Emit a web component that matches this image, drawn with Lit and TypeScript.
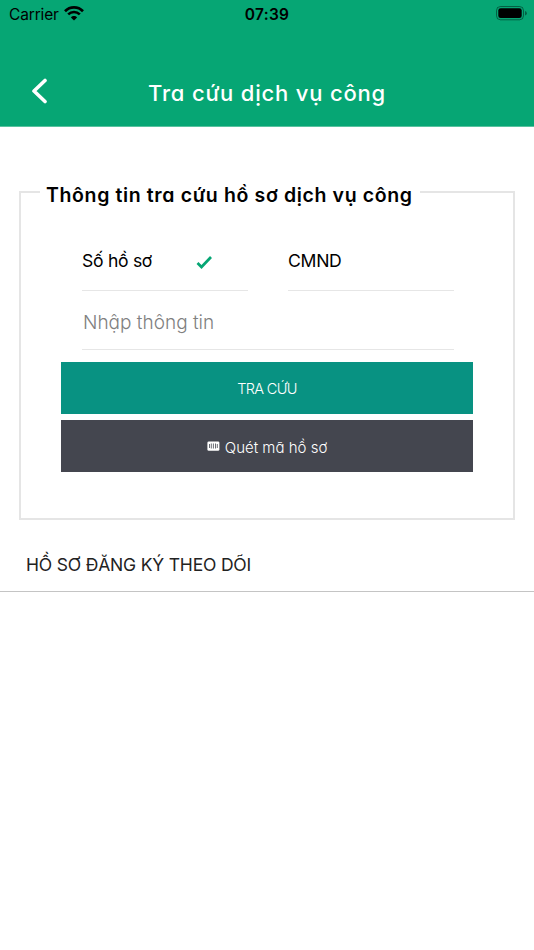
import { LitElement, html, css } from "lit";
import { customElement, state } from "lit/decorators.js";

@customElement("status-bar")
class StatusBar extends LitElement {
  static styles = css`
    :host {
      display: grid;
      grid-template-columns: 1fr auto 1fr;
      align-items: center;
      height: 27px;
      padding: 0 7px 0 9px;
      color: #000;
      font: 15.5px/27px Inter, sans-serif;
    }
    .carrier { display: flex; align-items: center; gap: 5px; letter-spacing: -0.15px; }
    .carrier span, .time { padding-top: 1px; }
    .time { font-weight: 600; letter-spacing: 0.3px; font-size: 15.5px; margin-right: 2px; }
    .battery { justify-self: end; display: block; margin-top: -1px; }
    svg { display: block; }
    .wifi { margin-top: -1px; }
  `;
  render() {
    return html`
      <div class="carrier">
        <span>Carrier</span>
        <svg class="wifi" width="20" height="15" viewBox="0 0 20 15" fill="none" stroke="#000">
          <path d="M1 5.2C6 .1 14 .1 19 5.2" stroke-width="2.7" />
          <path d="M4.2 8.4c3.3-3.2 8.3-3.2 11.6 0" stroke-width="2.6" />
          <path d="M6.9 11.4C8.6 9.6 11.4 9.6 13.1 11.4L10 14.5Z" fill="#000" stroke="none" />
        </svg>
      </div>
      <span class="time">07:39</span>
      <svg class="battery" width="31" height="15" viewBox="0 0 31 15">
        <rect x=".5" y=".5" width="27" height="13.3" rx="4" fill="none" stroke="#000" stroke-opacity=".42" />
        <rect x="2.3" y="2.3" width="23.4" height="9.7" rx="2.3" />
        <path d="M29.2 5v4.6q1.5-.6 1.5-2.3T29.2 5Z" fill-opacity=".5" />
      </svg>
    `;
  }
}

@customElement("app-root")
export class AppRoot extends LitElement {
  @state() private selected = 0;
  private kinds = ["Số hồ sơ", "CMND"];

  static styles = css`
    :host {
      display: block;
      min-height: 950px;
      background: #fff;
      color: #000;
      font-family: Inter, sans-serif;
    }
    * { box-sizing: border-box; }
    .geo { font-feature-settings: "cv11"; }
    header { height: 127px; background: #06a674; border-bottom: 1px solid #58c29f; }
    .nav {
      display: grid;
      grid-template-columns: 60px 1fr 60px;
      align-items: center;
      height: 72px;
      margin-top: 28px;
      color: #fff;
    }
    .back { display: block; margin: 0 0 0 30px; }
    .title {
      margin: 4px 0 0;
      text-align: center;
      font-size: 22px;
      font-weight: 450;
      letter-spacing: 0.8px;
      white-space: nowrap;
    }
    .lookup {
      height: 341px;
      margin: 52px 19px 0;
      padding: 26px 40px 0;
      border: 2px solid #e5e5e5;
    }
    .legend {
      height: 26px;
      margin-left: -21px;
      padding: 6px 7px 0 6px;
      font-size: 19.5px;
      line-height: 20px;
      font-weight: 560;
      letter-spacing: 0.63px;
      white-space: nowrap;
    }
    .kinds { display: grid; grid-template-columns: 166px 166px; column-gap: 40px; margin-left: 21px; }
    .kind {
      display: flex;
      justify-content: space-between;
      align-items: center;
      height: 60px;
      padding: 0 35px 1px 0;
      border-bottom: 1px solid #e6e6e6;
      font-size: 17.6px;
      letter-spacing: -0.3px;
    }
    .check { display: block; margin-top: 5px; }
    .query {
      display: block;
      width: 372px;
      height: 59px;
      margin: 0 0 12px 21px;
      padding: 4px 1px 0;
      border: 0;
      border-bottom: 1px solid #e6e6e6;
      outline: 0;
      background: none;
      font-family: Inter, sans-serif;
      font-size: 19px;
      font-weight: 300;
    }
    .query::placeholder { color: #808080; opacity: 1; }
    .action {
      display: flex;
      align-items: center;
      justify-content: center;
      gap: 5px;
      width: 412px;
      height: 52px;
      margin: 0 0 6px;
      padding: 0;
      border: 0;
      color: #fff;
      font-family: Inter, sans-serif;
      font-size: 15px;
      font-weight: 300;
    }
    .action span { padding-top: 2px; }
    .search { background: #089282; font-size: 14.5px; letter-spacing: -0.65px; }
    .scan { background: #44464f; }
    .heading {
      height: 72px;
      margin: 0;
      padding-left: 26px;
      border-bottom: 1px solid #c4c4c4;
      color: #222;
      font-size: 17.5px;
      line-height: 89px;
      font-weight: 400;
      letter-spacing: -0.18px;
    }
  `;

  render() {
    return html`
      <header>
        <status-bar></status-bar>
        <div class="nav">
          <svg class="back" width="18" height="26" viewBox="0 0 18 26" fill="none" stroke="#fff" stroke-width="3.6" stroke-linecap="round" stroke-linejoin="round">
            <path d="M15 2.5 4 13l11 10.5" />
          </svg>
          <h1 class="title geo">Tra cứu dịch vụ công</h1>
        </div>
      </header>
      <fieldset class="lookup">
        <legend class="legend geo">Thông tin tra cứu hồ sơ dịch vụ công</legend>
        <div class="kinds">
          ${this.kinds.map(
            (kind, i) => html`
              <div class="kind" @click=${() => (this.selected = i)}>
                <span>${kind}</span>
                ${i === this.selected
                  ? html`<svg class="check" width="17" height="15" viewBox="0 0 17 15" fill="none" stroke="#06a674" stroke-width="2.7">
                      <path d="m1.5 8 4 4L15 2" />
                    </svg>`
                  : ""}
              </div>
            `
          )}
        </div>
        <input class="query geo" placeholder="Nhập thông tin" />
        <button class="action search geo">TRA CỨU</button>
        <button class="action scan geo">
          <svg width="13" height="11" viewBox="0 0 13 11">
            <rect x=".4" y=".4" width="12" height="9.4" rx="1.4" fill="#fff" />
            <path d="M2.5 3v4M4.3 2.5v5M6.4 2.5v5M8.5 2.5v5M10.3 3v4" stroke="#44464f" stroke-width=".8" />
          </svg>
          <span>Quét mã hồ sơ</span>
        </button>
      </fieldset>
      <h2 class="heading">HỒ SƠ ĐĂNG KÝ THEO DÕI</h2>
    `;
  }
}
